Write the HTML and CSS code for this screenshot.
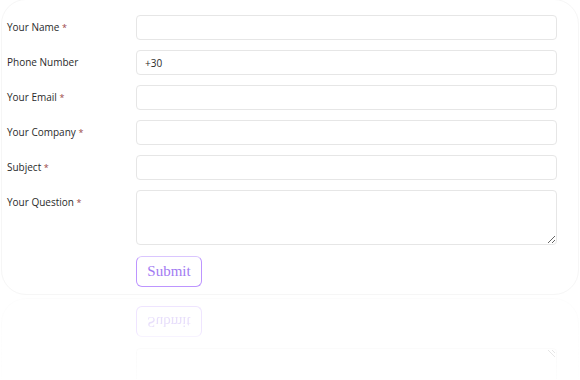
FILE: index.html
```html
<!DOCTYPE html>
<html lang="en">

<head>
  <meta charset="UTF-8" />
  <meta name="viewport" content="width=device-width, initial-scale=1.0" />
  <title>Contact Form</title>
  <link rel="stylesheet" href="styles.css">
</head>

<body>
  <div class="card">
    <!-- Contact Form -->
    <form class="contact-form" id="contactForm">
      <label class="field-label" for="name">Your Name <span class="req">*</span></label>
      <input class="field" type="text" id="name" name="name" />

      <label class="field-label" for="phone">Phone Number</label>
      <input class="field" type="tel" id="phone" name="phone" value="+30" />

      <label class="field-label" for="email">Your Email <span class="req">*</span></label>
      <input class="field" type="email" id="email" name="email" />

      <label class="field-label" for="company">Your Company <span class="req">*</span></label>
      <input class="field" type="text" id="company" name="company" />

      <label class="field-label" for="subject">Subject <span class="req">*</span></label>
      <input class="field" type="text" id="subject" name="subject" />

      <label class="field-label" for="question">Your Question <span class="req">*</span></label>
      <textarea class="field field-area" id="question" name="question"></textarea>

      <div class="actions">
        <button type="submit" class="btn">Submit</button>
      </div>
    </form>
  </div>

  <!-- Mirrored tail of the card (reflection effect) -->
  <div class="reflect" aria-hidden="true">
    <div class="card card-tail">
      <div class="contact-form">
        <span></span>
        <textarea class="field field-area" tabindex="-1"></textarea>
        <div class="actions">
          <span class="btn">Submit</span>
        </div>
      </div>
    </div>
  </div>
</body>

</html>
```

FILE: styles.css
```css
* {
  margin: 0;
  padding: 0;
  box-sizing: border-box;
}

body {
  background-color: #fff;
  color: #333;
  font-family: "Open Sans", sans-serif;
}

.card {
  margin: -1px 1px 0;
  width: 578px;
  background: #fff;
  border: 1px solid #f6f6f6;
  border-radius: 25px;
  padding: 15px 21px 7px 3px;
}

.contact-form {
  display: grid;
  grid-template-columns: 131px 1fr;
  row-gap: 10px;
}

.field-label {
  display: block;
  height: 25px;
  font-size: 10px;
  line-height: 25px;
  color: #2a2a2a;
  padding-left: 2px;
}

.req {
  color: #9a4646;
  font-size: 9px;
  line-height: 1;
}

.field {
  display: block;
  height: 25px;
  width: 100%;
  border: 1px solid #e6e6e6;
  border-radius: 4px;
  padding: 0 8px;
  font-family: "Open Sans", sans-serif;
  font-size: 10px;
  color: #2a2a2a;
  background: #fff;
  outline: none;
}

.field-area {
  height: 55px;
  padding: 6px 8px;
  resize: vertical;
}

.actions {
  grid-column: 2;
  padding-top: 1px;
}

.btn {
  display: block;
  width: 66px;
  height: 31px;
  background: #fff;
  border: 1px solid #bd95ff;
  border-top-color: #dac6ff;
  border-radius: 6px;
  color: #a27bf2;
  font-family: "Liberation Serif", serif;
  font-size: 15px;
  cursor: pointer;
}

/* Reflection */
.reflect {
  margin-top: 3px;
  height: 81px;
  overflow: hidden;
  display: flex;
  flex-direction: column;
  justify-content: flex-end;
  transform: scaleY(-1);
  opacity: 0.24;
  -webkit-mask-image: linear-gradient(to top, #000 35%, rgba(0, 0, 0, 0.35));
  mask-image: linear-gradient(to top, #000 35%, rgba(0, 0, 0, 0.35));
}

.card-tail {
  flex-shrink: 0;
  margin-top: 0;
  border-top: none;
  border-top-left-radius: 0;
  border-top-right-radius: 0;
  padding-top: 0;
}

.card-tail .btn {
  text-align: center;
  line-height: 29px;
}
```
